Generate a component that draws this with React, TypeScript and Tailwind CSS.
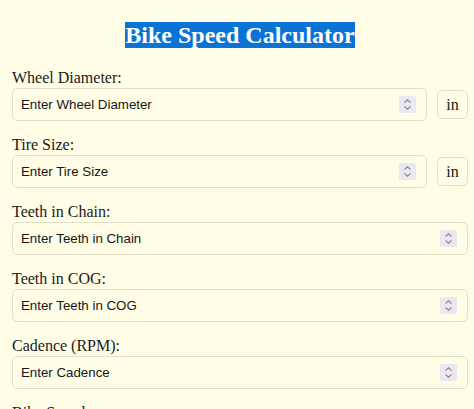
import React from "react"

const serif = "font-['Liberation_Serif','Times_New_Roman',serif]"
const sans = "font-['Liberation_Sans',Arial,sans-serif]"

function Spinner() {
  return (
    <div className="flex h-[17px] w-[17px] shrink-0 items-center justify-center rounded-[2px] bg-[#e9e7ef]">
      <svg width="9" height="13" viewBox="0 0 9 13" fill="none" stroke="#8a8a93" strokeWidth="1.1">
        <path d="M1.5 4.5 L4.5 1.8 L7.5 4.5" />
        <path d="M1.5 8.5 L4.5 11.2 L7.5 8.5" />
      </svg>
    </div>
  )
}

interface FieldProps {
  label: string
  placeholder: string
  unit?: string
}

function Field({ label, placeholder, unit }: FieldProps) {
  return (
    <div className="mb-[15px]">
      <label className={`block h-[18px] text-[16px] leading-[18px] text-[#1a1a1a] ${serif}`}>{label}</label>
      <div className="mt-[1px] flex items-center gap-[10px]">
        <div className="flex h-[33px] flex-1 items-center rounded-[5px] border border-[#e3dfc8] bg-[#fffde6] pl-[8px] pr-[10px]">
          <input
            type="text"
            placeholder={placeholder}
            className={`min-w-0 flex-1 bg-transparent text-[13.3px] text-[#111] outline-none placeholder:text-[#161616] ${sans}`}
          />
          <Spinner />
        </div>
        {unit && (
          <div
            className={`flex h-[29px] w-[31px] shrink-0 items-center justify-center rounded-[5px] border border-[#e3dfc8] text-[16px] text-[#1a1a1a] ${serif}`}
          >
            {unit}
          </div>
        )}
      </div>
    </div>
  )
}

export default function App() {
  return (
    <div className="min-h-[409px] overflow-hidden bg-[#fffde6] pl-[12px] pr-[6px]">
      <div className="flex justify-center pt-[22px]">
        <h1 className={`bg-[#0a73d6] text-[24px] font-bold leading-[26px] text-white ${serif}`}>Bike Speed Calculator</h1>
      </div>
      <div className="mt-[21px]">
        <Field label="Wheel Diameter:" placeholder="Enter Wheel Diameter" unit="in" />
        <Field label="Tire Size:" placeholder="Enter Tire Size" unit="in" />
        <Field label="Teeth in Chain:" placeholder="Enter Teeth in Chain" />
        <Field label="Teeth in COG:" placeholder="Enter Teeth in COG" />
        <Field label="Cadence (RPM):" placeholder="Enter Cadence" />
        <label className={`block h-[18px] text-[16px] leading-[18px] text-[#1a1a1a] ${serif}`}>Bike Speed:</label>
      </div>
    </div>
  )
}
